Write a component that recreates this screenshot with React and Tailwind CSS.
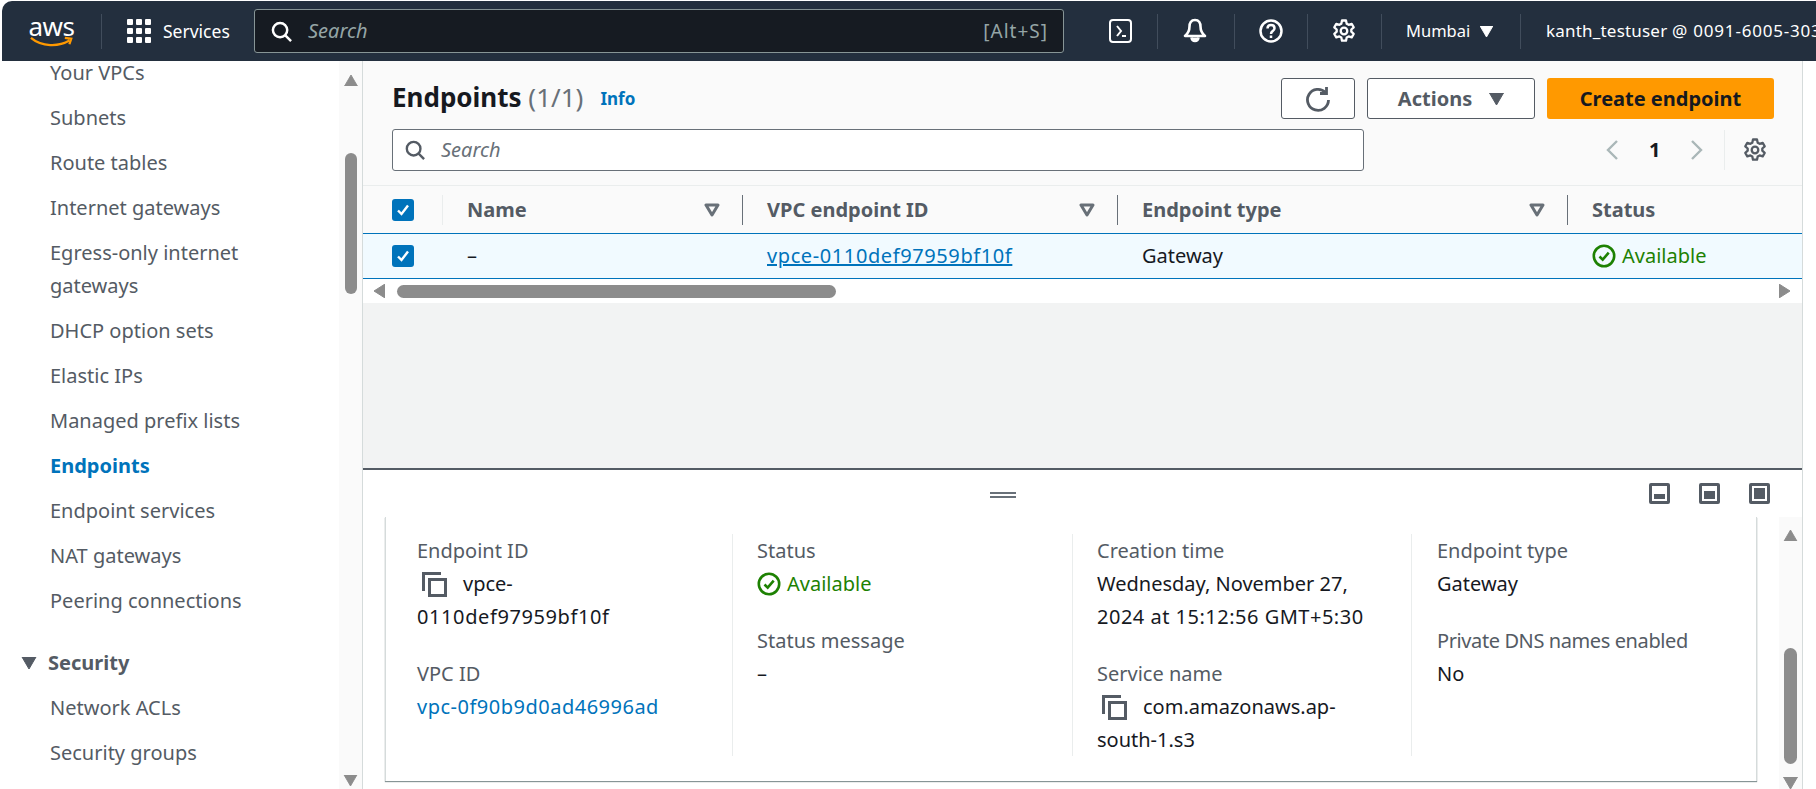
import React from "react";

const font = { fontFamily: '"Noto Sans", "Open Sans", sans-serif' };

function Tri({ className, dir = "down" }) {
  const pts = { down: "0,0 14,0 7,12", up: "7,0 14,12 0,12", left: "11,0 11,14 0,7", right: "0,0 11,7 0,14" };
  const box = dir === "left" || dir === "right" ? "0 0 11 14" : "0 0 14 12";
  return (
    <svg viewBox={box} className={className} fill="currentColor">
      <polygon points={pts[dir]} strokeLinejoin="round" stroke="currentColor" strokeWidth="1" />
    </svg>
  );
}

function SearchIcon({ className }) {
  return (
    <svg viewBox="0 0 22 22" className={className} fill="none" stroke="currentColor" strokeWidth="2.6">
      <circle cx="9.5" cy="9.5" r="7.5" />
      <path d="M15 15l6 6" />
    </svg>
  );
}

function Gear({ className }) {
  return (
    <svg viewBox="0 0 24 24" className={className} fill="none" stroke="currentColor" strokeWidth="2.3" strokeLinejoin="round">
      <path d="M10 1.5h4l.7 3.2 1.9 1.1 3.1-1 2 3.5-2.4 2.2v2.2l2.4 2.2-2 3.5-3.1-1-1.9 1.1-.7 3.2h-4l-.7-3.2-1.9-1.1-3.1 1-2-3.5 2.4-2.2V10.500L2.300 8.300l2-3.500 3.100 1 1.900-1.100z" />
      <circle cx="12" cy="12" r="3.300" />
    </svg>
  );
}

function FilterTri() {
  return (
    <svg viewBox="0 0 16 15" className="w-[16px] h-[15px] text-[#687078]" fill="none" stroke="currentColor" strokeWidth="3" strokeLinejoin="round">
      <polygon points="2,3 14,3 8,13" />
    </svg>
  );
}

function Check({ className = "" }) {
  return (
    <span className={`w-[22px] h-[22px] rounded-[3px] bg-[#0073bb] flex items-center justify-center ${className}`}>
      <svg viewBox="0 0 16 16" className="w-[16px] h-[16px]" fill="none" stroke="white" strokeWidth="2.400">
        <path d="M3 8.500l3.500 3.500L13 3.500" />
      </svg>
    </span>
  );
}

function StatusOk() {
  return (
    <span className="flex items-center gap-[6px] text-[#1d8102]">
      <svg viewBox="0 0 24 24" className="w-[24px] h-[24px]" fill="none" stroke="currentColor" strokeWidth="2.600">
        <circle cx="12" cy="12" r="10.200" />
        <path d="M7.500 12.500l3.200 3.200 6-7" />
      </svg>
      Available
    </span>
  );
}

function CopyIcon() {
  return (
    <svg viewBox="0 0 25 25" className="inline-block w-[25px] h-[25px] align-[-6px] text-[#545b64]" fill="none" stroke="currentColor" strokeWidth="3">
      <path d="M1.500 19V1.500H19" />
      <rect x="7.500" y="7.500" width="16" height="16" />
    </svg>
  );
}

function PanelIcon({ fill }) {
  return (
    <span className="w-[21px] h-[21px] border-[3px] border-[#545b64] rounded-[2px] p-[2px] flex items-end">
      <span className={`w-full bg-[#545b64] ${fill}`}></span>
    </span>
  );
}

function Sep() {
  return <span className="w-px h-[35px] bg-[#414d5c]"></span>;
}

function Header() {
  return (
    <header className="h-[60px] shrink-0 bg-[#232f3e] rounded-tl-[10px] flex items-center text-white text-[17px] whitespace-nowrap overflow-hidden [&>*]:shrink-0">
      <div className="w-[99px] flex justify-center">
        <div className="w-[48px] flex flex-col items-center">
          <span className="text-[26px] leading-[22px] h-[22px] tracking-[-0.5px]">aws</span>
          <svg viewBox="0 0 48 12" className="w-[48px] h-[11px] -mt-[1px]" fill="none" stroke="#ff9900" strokeWidth="2.500">
            <path d="M1 2c12 10 30 10 42 3M38 2l7 1-2 6" />
          </svg>
        </div>
      </div>
      <Sep />
      <div className="ml-[25px] w-[24px] grid grid-cols-3 gap-[3px]">
        {[0, 1, 2, 3, 4, 5, 6, 7, 8].map((i) => (
          <span key={i} className="w-[6px] h-[6px] bg-white rounded-[1px]"></span>
        ))}
      </div>
      <span className="ml-[12px] w-[66px] text-[17.5px]">Services</span>
      <div className="ml-[25px] w-[810px] h-[44px] bg-[#161b22] border border-[#879596] rounded-[3px] flex items-center pl-[16px] pr-[15px] text-[#95a5a6]">
        <SearchIcon className="w-[21px] h-[21px] text-white" />
        <span className="ml-[16px] italic text-[20px]">Search</span>
        <span className="ml-auto text-[19px] tracking-[1px]">[Alt+S]</span>
      </div>
      <div className="ml-[45px] w-[23px] h-[24px] border-[2.500px] border-white rounded-[4px] flex items-center justify-center text-[12px] font-bold leading-none">
        <svg viewBox="0 0 12 14" className="w-[12px] h-[14px]" fill="none" stroke="white" strokeWidth="2">
          <path d="M2 2l4 5-4 5M7 12h4" />
        </svg>
      </div>
      <span className="ml-[25px] flex"><Sep /></span>
      <svg viewBox="0 0 26 26" className="ml-[24px] w-[26px] h-[26px]" fill="none" stroke="white" strokeWidth="2.600" strokeLinejoin="round">
        <path d="M13 2c-4 0-5.500 3-5.500 6.500 0 4-1.500 7-4.500 9.500h20c-3-2.500-4.500-5.500-4.500-9.500C18.500 5 17 2 13 2z" />
        <path d="M9.500 19.500a3.500 3.500 0 0 0 7 0" fill="white" />
      </svg>
      <span className="ml-[26px] flex"><Sep /></span>
      <svg viewBox="0 0 24 24" className="ml-[24px] w-[24px] h-[24px]" fill="none" stroke="white" strokeWidth="2.500">
        <circle cx="12" cy="12" r="10.500" />
        <path d="M8.500 9.500c0-2.200 1.500-3.500 3.500-3.500s3.500 1.300 3.500 3.200c0 3-3.500 2.800-3.500 5.800M12 16.500v2.500" />
      </svg>
      <span className="ml-[24px] flex"><Sep /></span>
      <Gear className="ml-[24px] w-[24px] h-[24px]" />
      <span className="ml-[25px] flex"><Sep /></span>
      <span className="ml-[24px] w-[66px] text-[16.5px]">Mumbai</span>
      <Tri className="ml-[8px] w-[13px] h-[11px]" />
      <span className="ml-[27px] flex"><Sep /></span>
      <span className="ml-[25px] tracking-[0.2px]">kanth_testuser <span className="tracking-[0.8px]">@ 0091-6005-3031</span></span>
    </header>
  );
}

const navTop = ["Your VPCs", "Subnets", "Route tables", "Internet gateways"];
const navMid = ["DHCP option sets", "Elastic IPs", "Managed prefix lists"];
const navEnd = ["Endpoint services", "NAT gateways", "Peering connections"];

function NavItem({ children, active }) {
  return (
    <li className={`py-[6px] leading-[33px] ${active ? "font-bold text-[#0073bb]" : ""}`}>{children}</li>
  );
}

function Sidebar() {
  return (
    <aside className="w-[361px] shrink-0 flex bg-white border-r border-[#d5dbdb]">
      <div className="w-[337px] overflow-hidden text-[20px] text-[#545b64]">
        <ul className="-mt-[11px] pl-[48px] pr-[40px]">
          {navTop.map((n) => <NavItem key={n}>{n}</NavItem>)}
          <NavItem>Egress-only internet gateways</NavItem>
          {navMid.map((n) => <NavItem key={n}>{n}</NavItem>)}
          <NavItem active>Endpoints</NavItem>
          {navEnd.map((n) => <NavItem key={n}>{n}</NavItem>)}
        </ul>
        <div className="mt-[17px] h-[45px] flex items-center pl-[19px] font-bold">
          <Tri className="w-[16px] h-[12px] mr-[11px]" />
          Security
        </div>
        <ul className="pl-[48px]">
          <NavItem>Network ACLs</NavItem>
          <NavItem>Security groups</NavItem>
        </ul>
      </div>
      <div className="flex-1 bg-[#fafafa] flex flex-col items-center text-[#8c8c8c]">
        <Tri dir="up" className="mt-[14px] w-[14px] h-[11px]" />
        <span className="mt-[67px] w-[12px] h-[141px] rounded-full bg-[#8c8c8c]"></span>
        <Tri className="mt-auto mb-[3px] w-[15px] h-[11px]" />
      </div>
    </aside>
  );
}

function TopPanel() {
  return (
    <section className="h-[407px] shrink-0 flex flex-col bg-[#f2f3f3]">
      <div className="bg-[#fafafa] h-[125px] shrink-0 border-b border-[#eaeded] pl-[29px] pr-[28px] pt-[17px]">
        <div className="h-[41px] flex items-center">
          <h1 className="text-[26px] font-bold text-[#16191f] -mt-[2px]">
            Endpoints <span className="font-normal text-[#687078]">(1/1)</span>
          </h1>
          <span className="ml-[17px] text-[17px] font-bold text-[#0073bb]">Info</span>
          <button className="ml-auto w-[74px] h-[41px] border border-[#545b64] rounded-[3px] bg-white flex items-center justify-center text-[#545b64]">
            <svg viewBox="0 0 26 26" className="w-[26px] h-[26px]" fill="none" stroke="currentColor" strokeWidth="2.800">
              <path d="M20.500 6.500a10.500 10.500 0 1 0 3 7.500" />
              <path d="M21.500 1v6.500H15" />
            </svg>
          </button>
          <button className="ml-[12px] w-[168px] h-[41px] border border-[#545b64] rounded-[3px] bg-white flex items-center justify-center gap-[17px] text-[20px] font-bold text-[#545b64]">
            Actions
            <Tri className="w-[15px] h-[12px]" />
          </button>
          <button className="ml-[12px] w-[227px] h-[41px] rounded-[3px] bg-[#ff9900] text-[20px] font-bold text-[#16191f]">Create endpoint</button>
        </div>
        <div className="mt-[10px] h-[42px] flex items-center">
          <div className="w-[972px] h-[42px] border border-[#687078] rounded-[3px] bg-white flex items-center pl-[12px] text-[#687078]">
            <SearchIcon className="w-[20px] h-[20px] text-[#545b64]" />
            <span className="ml-[16px] italic text-[20px]">Search</span>
          </div>
          <svg viewBox="0 0 14 22" className="ml-[241px] w-[14px] h-[22px] text-[#aab7b8]" fill="none" stroke="currentColor" strokeWidth="2.400"><path d="M12 2L3 11l9 9" /></svg>
          <span className="ml-[30px] w-[12px] text-[20px] font-bold text-[#16191f]">1</span>
          <svg viewBox="0 0 14 22" className="ml-[29px] w-[14px] h-[22px] text-[#aab7b8]" fill="none" stroke="currentColor" strokeWidth="2.400"><path d="M2 2l9 9-9 9" /></svg>
          <span className="ml-[20px] w-px h-[40px] bg-[#eaeded]"></span>
          <Gear className="ml-[18px] w-[24px] h-[24px] text-[#545b64]" />
        </div>
      </div>
      <div className="h-[47px] shrink-0 bg-[#fafafa] grid grid-cols-[80px_300px_375px_450px_1fr] text-[20px] font-bold text-[#545b64] items-center">
        <div className="h-[30px] flex items-center pl-[29px] border-r border-[#eaeded]"><Check /></div>
        <div className="h-[30px] flex items-center justify-between pl-[24px] pr-[22px] border-r border-[#687078]">Name <FilterTri /></div>
        <div className="h-[30px] flex items-center justify-between pl-[24px] pr-[22px] border-r border-[#687078]">VPC endpoint ID <FilterTri /></div>
        <div className="h-[30px] flex items-center justify-between pl-[24px] pr-[22px] border-r border-[#687078]">Endpoint type <FilterTri /></div>
        <div className="pl-[24px]">Status</div>
      </div>
      <div className="h-[46px] shrink-0 bg-[#f1faff] border-y border-[#0073bb] grid grid-cols-[80px_300px_375px_450px_1fr] text-[20px] text-[#16191f] items-center">
        <div className="pl-[29px]"><Check /></div>
        <div className="pl-[24px]">–</div>
        <a className="pl-[24px] text-[#0073bb] underline tracking-[0.6px]">vpce-0110def97959bf10f</a>
        <div className="pl-[24px]">Gateway</div>
        <div className="pl-[24px]"><StatusOk /></div>
      </div>
      <div className="h-[24px] shrink-0 bg-white flex items-center text-[#8c8c8c] pl-[11px] pr-[12px]">
        <Tri dir="left" className="w-[11px] h-[14px]" />
        <span className="ml-[12px] w-[439px] h-[13px] rounded-full bg-[#8c8c8c]"></span>
        <Tri dir="right" className="ml-auto w-[11px] h-[14px]" />
      </div>
    </section>
  );
}

function Field({ label, children, className = "", labelClass = "" }) {
  return (
    <div className={className}>
      <div className={`text-[#545b64] ${labelClass}`}>{label}</div>
      <div className="text-[#16191f]">{children}</div>
    </div>
  );
}

function SplitPanel() {
  return (
    <section className="flex-1 min-h-0 border-t-2 border-[#545b64] bg-white flex flex-col">
      <div className="h-[47px] shrink-0 relative flex items-center justify-end gap-[29px] pr-[32px]">
        <span className="absolute left-[627px] top-[22px] w-[26px] h-[6px] border-y-2 border-[#687078]"></span>
        <PanelIcon fill="h-[5px]" />
        <PanelIcon fill="h-[8px]" />
        <PanelIcon fill="h-full" />
      </div>
      <div className="flex-1 min-h-0 flex pl-[22px]">
        <div className="w-[1372px] h-[264px] shrink-0 border-l border-r border-[#d5dbdb] bg-white shadow-[0_1px_1px_0_#879596] pt-[17px] grid grid-cols-[347px_340px_339px_1fr] text-[20px] leading-[33px]">
          <div className="h-[222px] pl-[31px] pr-[20px] border-r border-[#eaeded]">
            <Field label="Endpoint ID">
              <span className="ml-[5px] mr-[16px]"><CopyIcon /></span>vpce-
              <br /><span className="tracking-[0.6px]">0110def97959bf10f</span>
            </Field>
            <div className="mt-[24px]">
              <div className="text-[#545b64]">VPC ID</div>
              <a className="text-[#0073bb] tracking-[0.5px]">vpc-0f90b9d0ad46996ad</a>
            </div>
          </div>
          <div className="h-[222px] pl-[24px] pr-[20px] border-r border-[#eaeded]">
            <div className="text-[#545b64]">Status</div>
            <StatusOk />
            <Field label="Status message" className="mt-[24px]">–</Field>
          </div>
          <div className="h-[222px] pl-[24px] pr-[10px] border-r border-[#eaeded]">
            <Field label="Creation time">
              Wednesday, November 27,
              <br /><span className="tracking-[0.5px]">2024 at 15:12:56 GMT+5:30</span>
            </Field>
            <Field label="Service name" className="mt-[24px]">
              <span className="ml-[5px] mr-[16px]"><CopyIcon /></span>com.amazonaws.ap-
              <br />south-1.s3
            </Field>
          </div>
          <div className="h-[222px] pl-[25px]">
            <Field label="Endpoint type">Gateway</Field>
            <Field label="Private DNS names enabled" labelClass="tracking-[-0.4px]" className="mt-[24px]">No</Field>
          </div>
        </div>
        <div className="ml-auto w-[23px] bg-[#fafafa] flex flex-col items-center text-[#8c8c8c]">
          <Tri dir="up" className="mt-[13px] w-[15px] h-[11px]" />
          <span className="mt-[107px] w-[13px] h-[116px] rounded-full bg-[#8c8c8c]"></span>
          <Tri className="mt-auto w-[15px] h-[12px]" />
        </div>
      </div>
    </section>
  );
}

export default function App() {
  return (
    <div className="h-screen flex flex-col bg-white pl-[2px] pt-[1px] overflow-hidden" style={font}>
      <Header />
      <div className="flex-1 min-h-0 flex">
        <Sidebar />
        <main className="w-[1440px] shrink-0 flex flex-col border-r border-[#d5dbdb]">
          <TopPanel />
          <SplitPanel />
        </main>
        <div className="flex-1 bg-white"></div>
      </div>
    </div>
  );
}
